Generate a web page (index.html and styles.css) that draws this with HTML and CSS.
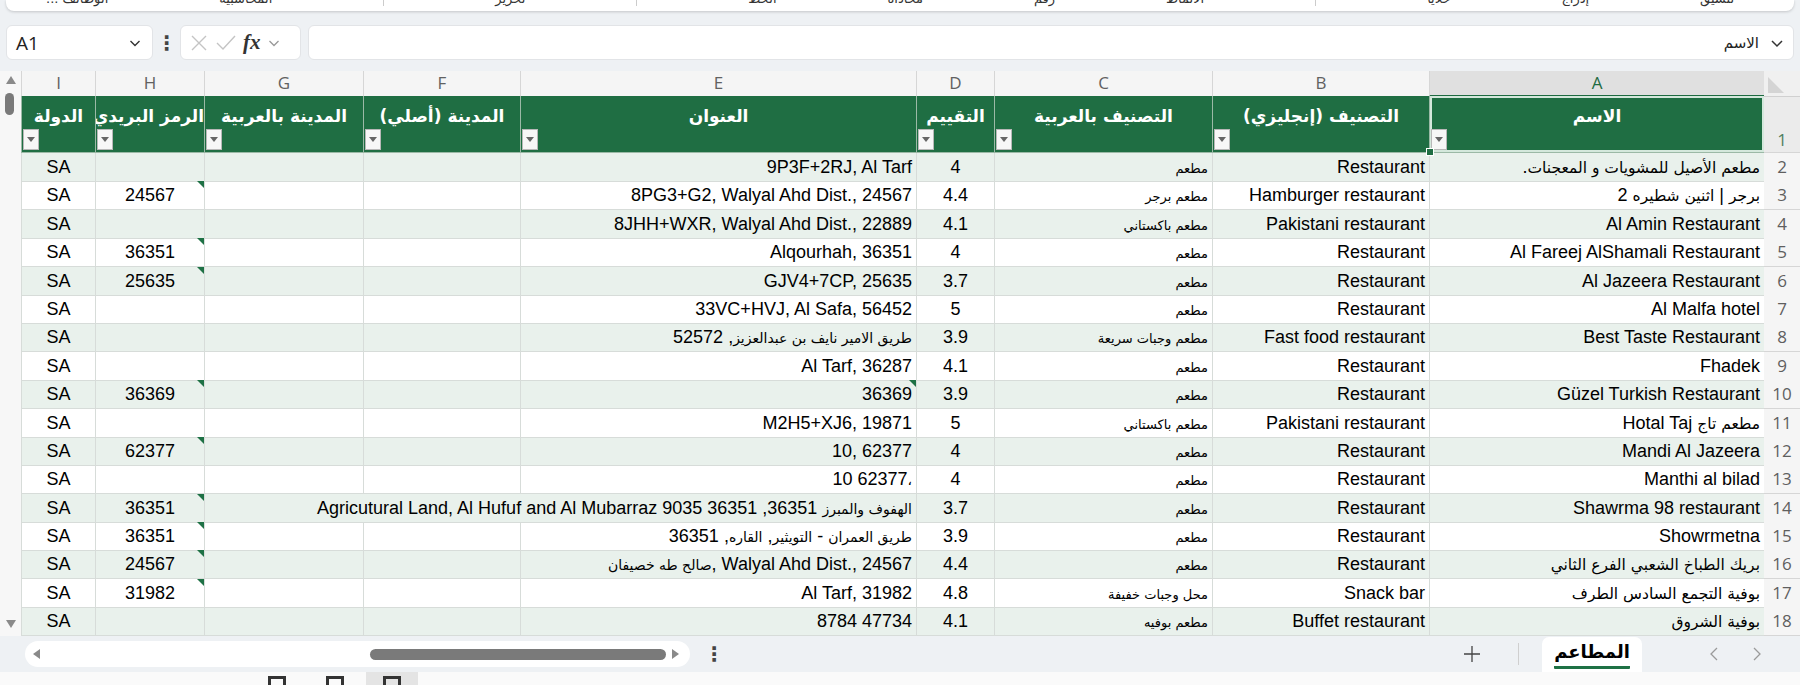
FILE: index.html
```html
<!DOCTYPE html>
<html lang="ar">
<head>
    <meta charset="UTF-8">
    <meta name="viewport" content="width=device-width, initial-scale=1.0">
    <title>المطاعم - Excel</title>
    <link rel="stylesheet" href="styles.css">
</head>
<body>
    <!-- Ribbon, cut off at the top edge -->
    <div class="ribbon" dir="rtl">
        <span class="rb-label">تنسيق</span>
        <span class="rb-label">إدراج</span>
        <span class="rb-label">خلايا</span>
        <span class="rb-sep"></span>
        <span class="rb-label">الأنماط</span>
        <span class="rb-label">رقم</span>
        <span class="rb-label">محاذاة</span>
        <span class="rb-label">الخط</span>
        <span class="rb-sep"></span>
        <span class="rb-label">تحرير</span>
        <span class="rb-sep"></span>
        <span class="rb-label">المحاسبية</span>
        <span class="rb-label">الوظائف ...</span>
    </div>

    <!-- Formula bar -->
    <div class="formula-bar">
        <div class="name-box">
            <span>A1</span>
            <svg width="14" height="14" viewBox="0 0 14 14"><path d="M2.5 5 L7 9.5 L11.5 5" fill="none" stroke="#333" stroke-width="1.4"/></svg>
        </div>
        <div class="fb-dots">⋮</div>
        <div class="fx-box">
            <svg width="20" height="20" viewBox="0 0 20 20"><path d="M3 3 L17 17 M17 3 L3 17" stroke="#c4c4c4" stroke-width="1.4"/></svg>
            <svg width="22" height="20" viewBox="0 0 22 20"><path d="M2 10 L8 16 L20 3" fill="none" stroke="#c4c4c4" stroke-width="1.4"/></svg>
            <span class="fx">fx</span>
            <svg width="14" height="14" viewBox="0 0 14 14"><path d="M2.5 5 L7 9.5 L11.5 5" fill="none" stroke="#999" stroke-width="1.3"/></svg>
        </div>
        <div class="formula-input" dir="rtl">
            <svg width="16" height="16" viewBox="0 0 16 16"><path d="M3 6 L8 11 L13 6" fill="none" stroke="#333" stroke-width="1.5"/></svg>
            <span class="fi-text">الاسم</span>
        </div>
    </div>

    <!-- Sheet -->
    <div class="sheet">
        <div class="vscroll">
            <span class="arrow-up"></span>
            <span class="vthumb"></span>
            <span class="arrow-down"></span>
        </div>
        <div class="grid" dir="rtl" id="grid">
            <div class="row letters">
                <div class="corner"><span class="corner-tri"></span></div>
                <div class="col-letter selected">A</div>
                <div class="col-letter">B</div>
                <div class="col-letter">C</div>
                <div class="col-letter">D</div>
                <div class="col-letter">E</div>
                <div class="col-letter">F</div>
                <div class="col-letter">G</div>
                <div class="col-letter">H</div>
                <div class="col-letter">I</div>
            </div>
            <div class="row head">
                <div class="row-num head-num">1</div>
                <div class="hcell active">الاسم<span class="filter"></span><span class="fill-handle"></span></div>
                <div class="hcell">التصنيف (إنجليزي)<span class="filter"></span></div>
                <div class="hcell">التصنيف بالعربية<span class="filter"></span></div>
                <div class="hcell">التقييم<span class="filter"></span></div>
                <div class="hcell">العنوان<span class="filter"></span></div>
                <div class="hcell">المدينة (أصلي)<span class="filter"></span></div>
                <div class="hcell">المدينة بالعربية<span class="filter"></span></div>
                <div class="hcell">الرمز البريدي<span class="filter"></span></div>
                <div class="hcell">الدولة<span class="filter"></span></div>
            </div>
            <!-- data rows are added by the script below -->
        </div>
    </div>

    <!-- Sheet tabs and horizontal scroll -->
    <div class="bottom-bar">
        <div class="hscroll">
            <span class="arrow-left"></span>
            <span class="hthumb"></span>
            <span class="arrow-right"></span>
        </div>
        <span class="bb-dots">⋮</span>
        <div class="tabs" dir="rtl">
            <span class="tab-nav"><svg width="10" height="16" viewBox="0 0 10 16"><path d="M2 2 L8 8 L2 14" fill="none" stroke="#9a9a9a" stroke-width="1.3"/></svg></span>
            <span class="tab-nav"><svg width="10" height="16" viewBox="0 0 10 16"><path d="M8 2 L2 8 L8 14" fill="none" stroke="#9a9a9a" stroke-width="1.3"/></svg></span>
            <span class="tab active"><span class="tab-text">المطاعم</span></span>
            <span class="tab-sep"></span>
            <span class="tab-add"><svg width="18" height="18" viewBox="0 0 18 18"><path d="M9 1 V17 M1 9 H17" stroke="#444" stroke-width="1.3"/></svg></span>
        </div>
    </div>

    <!-- Status bar, cut off at the bottom edge -->
    <div class="status-bar">
        <span class="view-icon"></span>
        <span class="view-icon"></span>
        <span class="view-current"><span class="view-icon"></span></span>
    </div>

    <script>
        // name, type (en), type (ar), rating, address, city, city (ar), postcode, country
        const restaurants = [
            ['مطعم الأصيل للمشويات و المعجنات.', 'Restaurant', 'مطعم', '4', '9P3F+2RJ, Al Tarf', '', '', '', 'SA'],
            ['برجر | اثنين شطيره 2', 'Hamburger restaurant', 'مطعم برجر', '4.4', '8PG3+G2, Walyal Ahd Dist., 24567', '', '', '24567', 'SA'],
            ['Al Amin Restaurant', 'Pakistani restaurant', 'مطعم باكستاني', '4.1', '8JHH+WXR, Walyal Ahd Dist., 22889', '', '', '', 'SA'],
            ['Al Fareej AlShamali Restaurant', 'Restaurant', 'مطعم', '4', 'Alqourhah, 36351', '', '', '36351', 'SA'],
            ['Al Jazeera Restaurant', 'Restaurant', 'مطعم', '3.7', 'GJV4+7CP, 25635', '', '', '25635', 'SA'],
            ['Al Malfa hotel', 'Restaurant', 'مطعم', '5', '33VC+HVJ, Al Safa, 56452', '', '', '', 'SA'],
            ['Best Taste Restaurant', 'Fast food restaurant', 'مطعم وجبات سريعة', '3.9', 'طريق الامير نايف بن عبدالعزيز, 52572', '', '', '', 'SA'],
            ['Fhadek', 'Restaurant', 'مطعم', '4.1', 'Al Tarf, 36287', '', '', '', 'SA'],
            ['Güzel Turkish Restaurant', 'Restaurant', 'مطعم', '3.9', '36369', '', '', '36369', 'SA'],
            ['مطعم تاج Hotal Taj', 'Pakistani restaurant', 'مطعم باكستاني', '5', 'M2H5+XJ6, 19871', '', '', '', 'SA'],
            ['Mandi Al Jazeera', 'Restaurant', 'مطعم', '4', '10, 62377', '', '', '62377', 'SA'],
            ['Manthi al bilad', 'Restaurant', 'مطعم', '4', '10 62377،', '', '', '', 'SA'],
            ['Shawrma 98 restaurant', 'Restaurant', 'مطعم', '3.7', 'Agricutural Land, Al Hufuf and Al Mubarraz 9035 36351 ,الهفوف والمبرز 36351', '', '', '36351', 'SA'],
            ['Showrmetna', 'Restaurant', 'مطعم', '3.9', 'طريق العمران - التويثير, القاره, 36351', '', '', '36351', 'SA'],
            ['بريك الطباخ الشعبي الفرع الثاني', 'Restaurant', 'مطعم', '4.4', 'صالح طه خصيفان, Walyal Ahd Dist., 24567', '', '', '24567', 'SA'],
            ['بوفية التجمع السادس الطرف', 'Snack bar', 'محل وجبات خفيفة', '4.8', 'Al Tarf, 31982', '', '', '31982', 'SA'],
            ['بوفية الشروق', 'Buffet restaurant', 'مطعم بوفيه', '4.1', '8784 47734', '', '', '', 'SA']
        ];

        const colClass = ['c-a', 'c-b', 'c-c', 'c-d', 'c-e', 'c-f', 'c-g', 'c-h', 'c-i'];

        // Arabic runs are set smaller, in their own font
        function markArabic(text) {
            return text.replace(/[\u0600-\u06FF]+(?:[\s\u0600-\u06FF]*[\u0600-\u06FF])?/g,
                m => `<span class="ar">${m}</span>`);
        }

        const grid = document.getElementById('grid');
        restaurants.forEach((r, i) => {
            const rowNum = i + 2;
            const row = document.createElement('div');
            row.className = 'row data' + (rowNum % 2 === 0 ? ' band' : '');
            let html = `<div class="row-num">${rowNum}</div>`;
            for (let c = 0; c < r.length; c++) {
                // the long address of row 14 runs over the empty F and G cells
                if (rowNum === 14 && c === 4) {
                    html += `<div class="cell c-e wide" dir="ltr">${markArabic(r[c])}</div>`;
                    c += 2;
                    continue;
                }
                let cls = 'cell ' + colClass[c];
                if ((c === 7 && r[c]) || (c === 4 && rowNum === 10)) cls += ' flag';
                const dir = c === 4 ? ' dir="ltr"' : '';
                html += `<div class="${cls}"${dir}>${markArabic(r[c])}</div>`;
            }
            row.innerHTML = html;
            grid.appendChild(row);
        });
    </script>
</body>
</html>
```

FILE: styles.css
```css
body {
    margin: 0;
    width: 1800px;
    height: 685px;
    overflow: hidden;
    background: #eef1f4;
    font-family: 'Liberation Sans', 'DejaVu Sans', sans-serif;
    color: #000;
}

/* Ribbon */
.ribbon {
    height: 11px;
    margin: 0 6px;
    background: #fff;
    border-radius: 0 0 8px 8px;
    box-shadow: 0 1px 3px rgba(0, 0, 0, 0.18);
    display: flex;
    justify-content: space-between;
    align-items: flex-start;
    padding: 0 60px 0 40px;
    overflow: hidden;
}

.rb-label {
    font-family: 'DejaVu Sans', sans-serif;
    font-size: 13px;
    line-height: 13px;
    color: #333;
    margin-top: -8px;
}

.rb-sep {
    width: 1px;
    height: 6px;
    background: #ccc;
}

/* Formula bar */
.formula-bar {
    display: flex;
    align-items: center;
    height: 35px;
    margin-top: 14px;
    padding: 0 6px;
}

.name-box {
    width: 147px;
    height: 35px;
    box-sizing: border-box;
    background: #fff;
    border: 1px solid #e2e4e7;
    border-radius: 6px;
    display: flex;
    align-items: center;
    justify-content: space-between;
    padding: 0 10px 0 9px;
    font-family: 'Open Sans', sans-serif;
    font-size: 19px;
    color: #222;
}

.fb-dots {
    width: 27px;
    text-align: center;
    font-size: 20px;
    font-weight: bold;
    color: #444;
}

.fx-box {
    width: 121px;
    height: 35px;
    box-sizing: border-box;
    background: #fff;
    border: 1px solid #e2e4e7;
    border-radius: 6px;
    display: flex;
    align-items: center;
    gap: 6px;
    padding: 0 4px 0 8px;
}

.fx {
    font-family: 'Liberation Serif', serif;
    font-style: italic;
    font-weight: bold;
    font-size: 21px;
    color: #333;
}

.formula-input {
    flex: 1;
    height: 35px;
    margin-left: 7px;
    box-sizing: border-box;
    background: #fff;
    border: 1px solid #e2e4e7;
    border-radius: 6px;
    display: flex;
    align-items: center;
    gap: 10px;
    padding-right: 8px;
}

.fi-text {
    font-family: 'DejaVu Sans', sans-serif;
    font-size: 15px;
    color: #222;
}

/* Sheet */
.sheet {
    display: flex;
    margin-top: 11px;
    height: 565px;
    overflow: hidden;
    background: #fff;
}

.vscroll {
    width: 21px;
    background: #f7f7f7;
    display: flex;
    flex-direction: column;
    align-items: center;
}

.arrow-up, .arrow-down {
    width: 0;
    height: 0;
    border-left: 5px solid transparent;
    border-right: 5px solid transparent;
}

.arrow-up {
    margin-top: 5px;
    border-bottom: 8px solid #8a8a8a;
}

.arrow-down {
    margin-top: auto;
    margin-bottom: 8px;
    border-top: 8px solid #8a8a8a;
}

.vthumb {
    width: 9px;
    height: 22px;
    margin-top: 9px;
    margin-left: -3px;
    border-radius: 5px;
    background: #7a7a7a;
}

.grid {
    width: 1779px;
}

.row {
    display: grid;
    grid-template-columns: 36px 335px 217px 218px 78px 396px 157px 159px 109px 74px;
}

/* Column letters */
.letters {
    height: 25px;
    background: #f5f5f5;
}

.corner {
    position: relative;
    background: #f0f0f0;
    border-bottom: 1px solid #d0d0d0;
}

.corner-tri {
    position: absolute;
    left: 4px;
    bottom: 3px;
    width: 0;
    height: 0;
    border-bottom: 16px solid #d4d4d4;
    border-right: 16px solid transparent;
}

.col-letter {
    box-sizing: border-box;
    border-left: 1px solid #d6d6d6;
    border-bottom: 1px solid #d0d0d0;
    text-align: center;
    font-family: 'Open Sans', sans-serif;
    font-size: 17px;
    line-height: 24px;
    color: #616161;
}

.col-letter.selected {
    background: #e0e0e0;
    color: #1e6b41;
    border-bottom: 2px solid #1e6b41;
}

/* Header row */
.head {
    height: 57px;
}

.row-num {
    box-sizing: border-box;
    background: #f5f5f5;
    border-bottom: 1px solid #d6d6d6;
    text-align: center;
    font-family: 'Open Sans', sans-serif;
    font-size: 17px;
    color: #5f5f5f;
}

.head-num {
    display: flex;
    align-items: flex-end;
    justify-content: center;
    padding-bottom: 1px;
    background: #ebebeb;
    color: #4f7f61;
}

.hcell {
    position: relative;
    box-sizing: border-box;
    background: #1f6e43;
    border-left: 1px solid #9bb9a6;
    border-bottom: 1px solid #9bb9a6;
    color: #fff;
    font-family: 'DejaVu Sans', sans-serif;
    font-weight: bold;
    font-size: 17px;
    text-align: center;
    white-space: nowrap;
    overflow: hidden;
    padding-top: 10px;
}

.hcell.active {
    overflow: visible;
    box-shadow: inset 0 0 0 2px #d4e8dc;
}

.filter {
    position: absolute;
    left: 1px;
    bottom: 2px;
    width: 16px;
    height: 21px;
    box-sizing: border-box;
    background: #f7f7f7;
    border: 1px solid #b8b8b8;
}

.filter::after {
    content: '';
    position: absolute;
    left: 3px;
    top: 7px;
    border-left: 4px solid transparent;
    border-right: 4px solid transparent;
    border-top: 5px solid #666;
}

.fill-handle {
    position: absolute;
    left: -4px;
    bottom: -4px;
    width: 6px;
    height: 6px;
    background: #1f6e43;
    border: 1px solid #fff;
    z-index: 2;
}

/* Data rows */
.data {
    height: 28.4px;
    background: #fff;
}

.data.band {
    background: #e9f1ec;
}

.data .row-num {
    background: #f5f5f5;
    line-height: 28px;
}

.cell {
    position: relative;
    box-sizing: border-box;
    border-left: 1px solid #d7dcd9;
    border-bottom: 1px solid #d7dcd9;
    padding: 0 4px;
    font-size: 18px;
    line-height: 28px;
    white-space: nowrap;
    overflow: hidden;
    text-align: right;
}

.cell.wide {
    grid-column: span 3;
}

.c-d, .c-h, .c-i {
    text-align: center;
}

.ar {
    font-family: 'DejaVu Sans', sans-serif;
    font-size: 13px;
}

.c-a .ar {
    font-size: 15.5px;
}

.c-e .ar {
    font-size: 14px;
}

.flag::after {
    content: '';
    position: absolute;
    top: 0;
    right: 0;
    border-top: 7px solid #1e7145;
    border-left: 7px solid transparent;
}

/* Bottom bar */
.bottom-bar {
    height: 36px;
    display: flex;
    align-items: center;
    background: #eef1f4;
}

.hscroll {
    width: 665px;
    height: 26px;
    margin-left: 25px;
    background: #fff;
    border-radius: 13px;
    display: flex;
    align-items: center;
}

.arrow-left, .arrow-right {
    width: 0;
    height: 0;
    border-top: 5px solid transparent;
    border-bottom: 5px solid transparent;
}

.arrow-left {
    margin-left: 8px;
    border-right: 7px solid #8a8a8a;
}

.hthumb {
    width: 296px;
    height: 11px;
    margin-left: 330px;
    border-radius: 6px;
    background: #7a7a7a;
}

.arrow-right {
    margin-left: 6px;
    border-left: 7px solid #8a8a8a;
}

.bb-dots {
    margin-left: 14px;
    font-size: 20px;
    font-weight: bold;
    color: #444;
}

.tabs {
    margin-left: auto;
    height: 36px;
    padding-right: 22px;
    display: flex;
    align-items: center;
}

.tab-nav {
    width: 43px;
    height: 16px;
    display: flex;
    justify-content: center;
}

.tab {
    align-self: flex-end;
    width: 100px;
    height: 35px;
    margin-right: 50px;
    background: #fff;
    border-radius: 7px 7px 0 0;
    display: flex;
    justify-content: center;
}

.tab-text {
    font-family: 'DejaVu Sans', sans-serif;
    font-weight: bold;
    font-size: 18px;
    line-height: 29px;
    height: 29px;
    border-bottom: 3px solid #1e7145;
    border-radius: 1px;
}

.tab-sep {
    width: 1px;
    height: 22px;
    margin-right: 23px;
    background: #cfcfcf;
}

.tab-add {
    display: flex;
    margin-right: 37px;
}

/* Status bar */
.status-bar {
    height: 13px;
    background: #fafafa;
    display: flex;
    align-items: flex-start;
    padding-left: 268px;
    gap: 40px;
}

.view-icon {
    width: 18px;
    height: 16px;
    margin-top: 4px;
    border: 3px solid #333;
    box-sizing: border-box;
}

.view-current {
    width: 52px;
    height: 13px;
    margin-left: -18px;
    background: #e4e4e4;
    display: flex;
    justify-content: center;
}
```
